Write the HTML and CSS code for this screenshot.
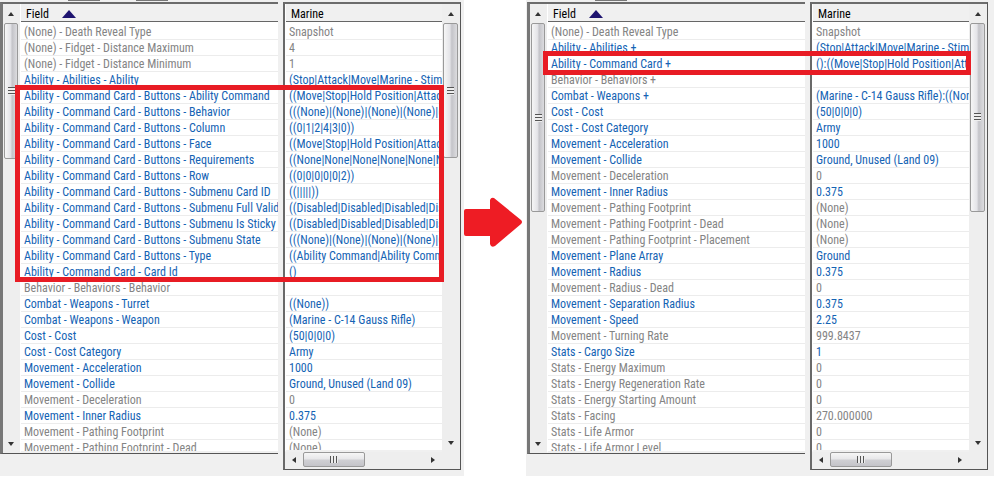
FILE: index.html
```html
<!DOCTYPE html>
<html lang="en">
<head>
<meta charset="utf-8">
<title>Unit fields</title>
<link rel="stylesheet" href="styles.css">
</head>
<body>
<main class="compare">
  <section class="window window-before">
    <div class="pane pane-field">
      <div class="vbar">
        <button class="step up" aria-label="Scroll up"></button>
        <div class="track"><div class="thumb thumb-short"><i class="grip"></i></div></div>
        <button class="step down" aria-label="Scroll down"></button>
      </div>
      <div class="list">
        <table>
          <thead><tr><th>Field <svg class="sort" viewBox="0 0 14 8"><path d="M7 0L14 8H0Z"/></svg></th></tr></thead>
          <tbody>
            <tr class="off"><td>(None) - Death Reveal Type</td></tr>
            <tr class="off"><td>(None) - Fidget - Distance Maximum</td></tr>
            <tr class="off"><td>(None) - Fidget - Distance Minimum</td></tr>
            <tr><td>Ability - Abilities - Ability</td></tr>
            <tr><td>Ability - Command Card - Buttons - Ability Command</td></tr>
            <tr><td>Ability - Command Card - Buttons - Behavior</td></tr>
            <tr><td>Ability - Command Card - Buttons - Column</td></tr>
            <tr><td>Ability - Command Card - Buttons - Face</td></tr>
            <tr><td>Ability - Command Card - Buttons - Requirements</td></tr>
            <tr><td>Ability - Command Card - Buttons - Row</td></tr>
            <tr><td>Ability - Command Card - Buttons - Submenu Card ID</td></tr>
            <tr><td>Ability - Command Card - Buttons - Submenu Full Valid</td></tr>
            <tr><td>Ability - Command Card - Buttons - Submenu Is Sticky</td></tr>
            <tr><td>Ability - Command Card - Buttons - Submenu State</td></tr>
            <tr><td>Ability - Command Card - Buttons - Type</td></tr>
            <tr><td>Ability - Command Card - Card Id</td></tr>
            <tr class="off"><td>Behavior - Behaviors - Behavior</td></tr>
            <tr><td>Combat - Weapons - Turret</td></tr>
            <tr><td>Combat - Weapons - Weapon</td></tr>
            <tr><td>Cost - Cost</td></tr>
            <tr><td>Cost - Cost Category</td></tr>
            <tr><td>Movement - Acceleration</td></tr>
            <tr><td>Movement - Collide</td></tr>
            <tr class="off"><td>Movement - Deceleration</td></tr>
            <tr><td>Movement - Inner Radius</td></tr>
            <tr class="off"><td>Movement - Pathing Footprint</td></tr>
            <tr class="off"><td>Movement - Pathing Footprint - Dead</td></tr>
          </tbody>
        </table>
      </div>
    </div>
    <div class="pane pane-value">
      <div class="list">
        <table>
          <thead><tr><th>Marine</th></tr></thead>
          <tbody>
            <tr class="off"><td>Snapshot</td></tr>
            <tr class="off"><td>4</td></tr>
            <tr class="off"><td>1</td></tr>
            <tr><td>(Stop|Attack|Move|Marine - Stimp</td></tr>
            <tr><td>((Move|Stop|Hold Position|Attack</td></tr>
            <tr><td>(((None)|(None)|(None)|(None)|(N</td></tr>
            <tr><td>((0|1|2|4|3|0))</td></tr>
            <tr><td>((Move|Stop|Hold Position|Attack</td></tr>
            <tr><td>((None|None|None|None|None|N</td></tr>
            <tr><td>((0|0|0|0|0|2))</td></tr>
            <tr><td>((|||||))</td></tr>
            <tr><td>((Disabled|Disabled|Disabled|Disa</td></tr>
            <tr><td>((Disabled|Disabled|Disabled|Disa</td></tr>
            <tr><td>(((None)|(None)|(None)|(None)|(N</td></tr>
            <tr><td>((Ability Command|Ability Comma</td></tr>
            <tr><td>()</td></tr>
            <tr><td></td></tr>
            <tr><td>((None))</td></tr>
            <tr><td>(Marine - C-14 Gauss Rifle)</td></tr>
            <tr><td>(50|0|0|0)</td></tr>
            <tr><td>Army</td></tr>
            <tr><td>1000</td></tr>
            <tr><td>Ground, Unused (Land 09)</td></tr>
            <tr class="off"><td>0</td></tr>
            <tr><td>0.375</td></tr>
            <tr class="off"><td>(None)</td></tr>
            <tr class="off"><td>(None)</td></tr>
          </tbody>
        </table>
      </div>
      <div class="vbar">
        <button class="step up" aria-label="Scroll up"></button>
        <div class="track"><div class="thumb thumb-short"><i class="grip"></i></div></div>
        <button class="step down" aria-label="Scroll down"></button>
      </div>
      <div class="hbar">
        <button class="step left" aria-label="Scroll left"></button>
        <div class="track"><div class="thumb"><i class="grip"></i></div></div>
        <button class="step right" aria-label="Scroll right"></button>
      </div>
    </div>
    <div class="mark mark-many"></div>
  </section>

  <svg class="arrow" viewBox="0 0 60 50"><path d="M0 14Q0 12 2 12H26V3Q27 0 30 1L57 23Q59 25 57 27L31 49Q27 51 26 47V39H2Q0 39 0 37Z"/></svg>

  <section class="window window-after">
    <div class="pane pane-field">
      <div class="vbar">
        <button class="step up" aria-label="Scroll up"></button>
        <div class="track"><div class="thumb thumb-long"><i class="grip"></i></div></div>
        <button class="step down" aria-label="Scroll down"></button>
      </div>
      <div class="list">
        <table>
          <thead><tr><th>Field <svg class="sort" viewBox="0 0 14 8"><path d="M7 0L14 8H0Z"/></svg></th></tr></thead>
          <tbody>
            <tr class="off"><td>(None) - Death Reveal Type</td></tr>
            <tr><td>Ability - Abilities +</td></tr>
            <tr><td>Ability - Command Card +</td></tr>
            <tr class="off"><td>Behavior - Behaviors +</td></tr>
            <tr><td>Combat - Weapons +</td></tr>
            <tr><td>Cost - Cost</td></tr>
            <tr><td>Cost - Cost Category</td></tr>
            <tr><td>Movement - Acceleration</td></tr>
            <tr><td>Movement - Collide</td></tr>
            <tr class="off"><td>Movement - Deceleration</td></tr>
            <tr><td>Movement - Inner Radius</td></tr>
            <tr class="off"><td>Movement - Pathing Footprint</td></tr>
            <tr class="off"><td>Movement - Pathing Footprint - Dead</td></tr>
            <tr class="off"><td>Movement - Pathing Footprint - Placement</td></tr>
            <tr><td>Movement - Plane Array</td></tr>
            <tr><td>Movement - Radius</td></tr>
            <tr class="off"><td>Movement - Radius - Dead</td></tr>
            <tr><td>Movement - Separation Radius</td></tr>
            <tr><td>Movement - Speed</td></tr>
            <tr class="off"><td>Movement - Turning Rate</td></tr>
            <tr><td>Stats - Cargo Size</td></tr>
            <tr class="off"><td>Stats - Energy Maximum</td></tr>
            <tr class="off"><td>Stats - Energy Regeneration Rate</td></tr>
            <tr class="off"><td>Stats - Energy Starting Amount</td></tr>
            <tr class="off"><td>Stats - Facing</td></tr>
            <tr class="off"><td>Stats - Life Armor</td></tr>
            <tr class="off"><td>Stats - Life Armor Level</td></tr>
          </tbody>
        </table>
      </div>
    </div>
    <div class="pane pane-value">
      <div class="list">
        <table>
          <thead><tr><th>Marine</th></tr></thead>
          <tbody>
            <tr class="off"><td>Snapshot</td></tr>
            <tr><td>(Stop|Attack|Move|Marine - Stimp</td></tr>
            <tr><td>():((Move|Stop|Hold Position|Atta</td></tr>
            <tr><td></td></tr>
            <tr><td>(Marine - C-14 Gauss Rifle):((Non</td></tr>
            <tr><td>(50|0|0|0)</td></tr>
            <tr><td>Army</td></tr>
            <tr><td>1000</td></tr>
            <tr><td>Ground, Unused (Land 09)</td></tr>
            <tr class="off"><td>0</td></tr>
            <tr><td>0.375</td></tr>
            <tr class="off"><td>(None)</td></tr>
            <tr class="off"><td>(None)</td></tr>
            <tr class="off"><td>(None)</td></tr>
            <tr><td>Ground</td></tr>
            <tr><td>0.375</td></tr>
            <tr class="off"><td>0</td></tr>
            <tr><td>0.375</td></tr>
            <tr><td>2.25</td></tr>
            <tr class="off"><td>999.8437</td></tr>
            <tr><td>1</td></tr>
            <tr class="off"><td>0</td></tr>
            <tr class="off"><td>0</td></tr>
            <tr class="off"><td>0</td></tr>
            <tr class="off"><td>270.000000</td></tr>
            <tr class="off"><td>0</td></tr>
            <tr class="off"><td>0</td></tr>
          </tbody>
        </table>
      </div>
      <div class="vbar">
        <button class="step up" aria-label="Scroll up"></button>
        <div class="track"><div class="thumb thumb-long"><i class="grip"></i></div></div>
        <button class="step down" aria-label="Scroll down"></button>
      </div>
      <div class="hbar">
        <button class="step left" aria-label="Scroll left"></button>
        <div class="track"><div class="thumb"><i class="grip"></i></div></div>
        <button class="step right" aria-label="Scroll right"></button>
      </div>
    </div>
    <div class="mark mark-one"></div>
  </section>
</main>
</body>
</html>
```
FILE: styles.css
```css
* {
  box-sizing: border-box;
}

body {
  margin: 0;
  background: #fff;
  color: #000;
  font: 12px/15px "Roboto Condensed", Roboto, "Liberation Sans", sans-serif;
}

.compare {
  display: grid;
  grid-template-columns: 464fr 62fr 468fr;
  height: 100vh;
  padding-bottom: 2px;
}

.window {
  position: relative;
  display: grid;
  grid-template-columns: 283fr 178fr;
  min-width: 0;
  min-height: 0;
  padding: 2px 3px 6px 0;
  background-color: #f0f0f0;
  background-repeat: no-repeat;
  background-size: 32px 1px;
}

.window-before {
  background-image: linear-gradient(#777, #777), linear-gradient(#777, #777);
  background-position: 68px 0, 136px 0;
}

.window-after {
  padding-left: 1px;
  padding-right: 6px;
  background-image: linear-gradient(#777, #777);
  background-position: 69px 0;
}

.pane {
  display: grid;
  min-width: 0;
  min-height: 0;
  border-top: 2px solid #6c6c6c;
  border-bottom: 1px solid #555;
}

.pane-field {
  grid-template-columns: 17px 1fr;
  margin-right: 5px;
  margin-bottom: 16px;
  border-left: 3px solid #777;
}

.pane-value {
  grid-template-columns: 1fr 18px;
  grid-template-rows: 1fr 17px;
  border-left: 2px solid #696969;
  border-right: 1px solid #555;
}

.list {
  min-width: 0;
  overflow: hidden;
  border-left: 1px solid #fff;
  border-bottom: 2px solid #f0f0f0;
  background: #fff;
}

table {
  width: 100%;
  table-layout: fixed;
  border-spacing: 0;
}

th {
  height: 18px;
  padding: 2px 5px 0;
  border-bottom: 1px solid #666;
  background: #f0f0f0;
  font-weight: 400;
  line-height: 14px;
  text-align: left;
}

thead::after {
  content: "";
  display: block;
  height: 2px;
}

td {
  height: 16px;
  padding: 1px 3px 0;
  overflow: hidden;
  border-bottom: 1px solid #ececec;
  color: #1463b4;
  line-height: 14px;
  white-space: nowrap;
}

.off td {
  color: #848484;
}

.sort {
  width: 14px;
  height: 8px;
  margin-left: 10px;
  fill: #1e1470;
}

.vbar,
.hbar {
  display: flex;
  background: #eee;
}

.vbar {
  flex-direction: column;
  padding: 0 2px 0 1px;
}

.hbar {
  grid-column: 1 / -1;
  padding: 0 18px 2px 0;
}

.track {
  flex: 1;
  min-width: 0;
  min-height: 0;
}

.step {
  display: flex;
  flex: none;
  align-items: center;
  justify-content: center;
  width: 18px;
  padding: 0;
  border: 0;
  background: none;
}

.vbar .step {
  width: 100%;
  height: 19px;
}

.step::before {
  content: "";
  border: 3px solid transparent;
}

.up::before {
  border-bottom: 4px solid #333;
  border-top: 0;
}

.down::before {
  border-top: 4px solid #333;
  border-bottom: 0;
}

.left::before {
  border-right: 4px solid #333;
  border-left: 0;
}

.right::before {
  border-left: 4px solid #333;
  border-right: 0;
}

.thumb {
  display: flex;
  align-items: center;
  justify-content: center;
  border: 1px solid #999;
  border-radius: 2px;
}

.vbar .thumb {
  background: linear-gradient(90deg, #f6f6f6, #e4e4e8 45%, #c4c4c9 60%, #dcdcdf);
}

.hbar .thumb {
  width: 51%;
  height: 100%;
  background: linear-gradient(#f6f6f6, #e8e8ea 45%, #cfcfd3 55%, #c4c4c9);
}

.thumb-short {
  height: 33%;
}

.thumb-long {
  height: 46%;
}

.vbar .grip {
  width: 7px;
  height: 8px;
  background: repeating-linear-gradient(#555 0 1px, #eee 1px 3px);
}

.hbar .grip {
  width: 8px;
  height: 7px;
  background: repeating-linear-gradient(90deg, #555 0 1px, #eee 1px 3px);
}

.arrow {
  align-self: center;
  width: 60px;
  height: 50px;
  margin-top: -32px;
  fill: #ee1c24;
}

.mark {
  position: absolute;
  border: 5px solid #e81c24;
}

.mark-many {
  top: 85px;
  left: 15px;
  right: 20px;
  height: 197px;
}

.mark-one {
  top: 51px;
  left: 17px;
  right: 23px;
  height: 24px;
}
```
